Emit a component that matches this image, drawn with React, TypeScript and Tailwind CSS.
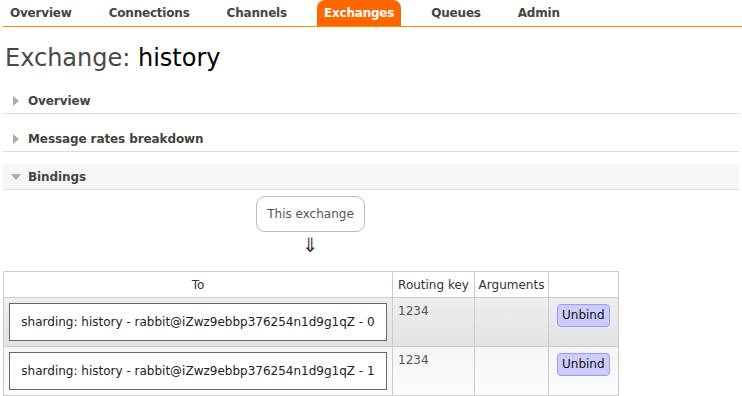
import React from "react";

const tabs = ["Overview", "Connections", "Channels", "Exchanges", "Queues", "Admin"];

function Section({ title, open }: { title: string; open?: boolean }) {
  return (
    <div
      className={`flex items-center h-[26px] border-b border-[#ddd] mb-[12px] ${open ? "bg-[#f6f6f6]" : ""}`}
    >
      <span className="w-[25px] flex justify-center">
        {open ? (
          <svg width="10" height="6" viewBox="0 0 10 6">
            <path d="M0 0 L10 0 L5 6 Z" fill="#aaa" />
          </svg>
        ) : (
          <svg width="6" height="10" viewBox="0 0 6 10">
            <path d="M0 0 L6 5 L0 10 Z" fill="#aaa" />
          </svg>
        )}
      </span>
      <span className="font-bold text-[12px] tracking-[-0.1px] text-[#444]">{title}</span>
    </div>
  );
}

function BindingRow({ n, shade }: { n: number; shade: string }) {
  return (
    <tr className={shade}>
      <td className="border border-[#ccc] p-[5px] align-top">
        <div className="border border-[#666] bg-white text-center py-[10px] text-[12px] leading-[16px] text-[#222]">
          sharding: history - rabbit@iZwz9ebbp376254n1d9g1qZ - {n}
        </div>
      </td>
      <td className="border border-[#ccc] px-[5px] pt-[4px] align-top text-[12px] text-[#555]">1234</td>
      <td className="border border-[#ccc]"></td>
      <td className="border border-[#ccc] align-top pt-[4px] pl-[8px]">
        <button className="bg-[#ccccff] border border-[#99f] rounded-[4px] px-[4px] h-[23px] text-[12px] text-[#111]">
          Unbind
        </button>
      </td>
    </tr>
  );
}

export default function App() {
  return (
    <div className="w-[742px] h-[396px] overflow-hidden bg-white text-[#444] font-['DejaVu_Sans',Verdana,sans-serif]">
      <ul className="flex border-b border-[#f80] ml-[3px] h-[27px]">
        {tabs.map((t) => (
          <li
            key={t}
            className={`px-[7px] mr-[23px] h-[26px] leading-[26px] text-[12px] tracking-[-0.2px] font-bold ${
              t === "Exchanges" ? "bg-[#ff6600] text-white rounded-t-[8px]" : "text-[#444]"
            }`}
          >
            {t}
          </li>
        ))}
      </ul>

      <div className="px-[3px]">
        <h1 className="text-[24px] leading-[28px] mt-[17px] mb-[16px] ml-[2px] text-[#484848]">
          Exchange: <span className="text-black">history</span>
        </h1>

        <Section title="Overview" />
        <Section title="Message rates breakdown" />
        <Section title="Bindings" open />

        <div className="w-[615px] mt-[-6px]">
          <div className="flex flex-col items-center">
            <div className="border border-[#bbb] rounded-[9px] px-[10px] h-[36px] leading-[34px] text-[12px] text-[#555]">
              This exchange
            </div>
            <div className="text-[20px] leading-[22px] mt-[2px] text-[#333]">⇓</div>
          </div>

          <table className="mt-[15px] border-collapse w-[615px] table-fixed">
            <colgroup>
              <col className="w-[389px]" />
              <col className="w-[82px]" />
              <col className="w-[74px]" />
              <col className="w-[70px]" />
            </colgroup>
            <thead>
              <tr className="h-[26px] text-[12px] font-normal text-[#333]">
                <th className="border border-[#ccc] font-normal">To</th>
                <th className="border border-[#ccc] font-normal">Routing key</th>
                <th className="border border-[#ccc] font-normal">Arguments</th>
                <th className="border border-[#ccc]"></th>
              </tr>
            </thead>
            <tbody>
              <BindingRow n={0} shade="bg-gradient-to-b from-[#eee] to-[#e2e2e2]" />
              <BindingRow n={1} shade="bg-gradient-to-b from-[#f5f5f5] to-[#fcfcfc]" />
            </tbody>
          </table>
        </div>
      </div>
    </div>
  );
}
